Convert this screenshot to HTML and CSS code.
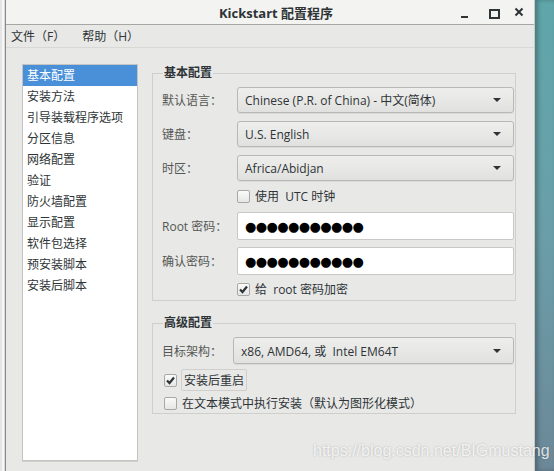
FILE: index.html
```html
<!DOCTYPE html>
<html lang="zh-CN">
<head>
<meta charset="utf-8">
<title>Kickstart 配置程序</title>
<link rel="stylesheet" href="styles.css">
</head>
<body>
<div class="desk">
  <div class="behind"></div>
  <div class="window">
    <div class="titlebar">
      <div class="title">Kickstart 配置程序</div>
      <div class="controls">
        <span class="ctl min"></span>
        <span class="ctl max"></span>
        <span class="ctl close">
          <svg width="10" height="10" viewBox="0 0 10 10"><path d="M1.5 1.5 L8.5 8.5 M8.5 1.5 L1.5 8.5" stroke="#2e3436" stroke-width="2"/></svg>
        </span>
      </div>
    </div>
    <div class="menubar">
      <span class="menu">文件（F）</span>
      <span class="menu">帮助（H）</span>
    </div>
    <div class="main">
      <ul class="navlist">
        <li class="sel">基本配置</li>
        <li>安装方法</li>
        <li>引导装载程序选项</li>
        <li>分区信息</li>
        <li>网络配置</li>
        <li>验证</li>
        <li>防火墙配置</li>
        <li>显示配置</li>
        <li>软件包选择</li>
        <li>预安装脚本</li>
        <li>安装后脚本</li>
      </ul>
      <div class="panel">
        <fieldset class="group basic">
          <legend>基本配置</legend>
          <div class="row">
            <label class="lbl">默认语言：</label>
            <div class="combo"><span>Chinese (P.R. of China) - 中文(简体)</span><i class="arrow"></i></div>
          </div>
          <div class="row">
            <label class="lbl">键盘：</label>
            <div class="combo"><span>U.S. English</span><i class="arrow"></i></div>
          </div>
          <div class="row">
            <label class="lbl">时区：</label>
            <div class="combo"><span>Africa/Abidjan</span><i class="arrow"></i></div>
          </div>
          <div class="checkrow utc">
            <span class="cb"></span><span class="cbtext">使用 &nbsp;UTC 时钟</span>
          </div>
          <div class="row pw">
            <label class="lbl">Root 密码：</label>
            <div class="entry"><span class="dots">●●●●●●●●●●●</span></div>
          </div>
          <div class="row pw">
            <label class="lbl">确认密码：</label>
            <div class="entry"><span class="dots">●●●●●●●●●●●</span></div>
          </div>
          <div class="checkrow enc">
            <span class="cb on"><svg width="11" height="11" viewBox="0 0 11 11"><path d="M2 5.5 L4.5 8 L9 2.5" fill="none" stroke="#2e3436" stroke-width="2.2"/></svg></span><span class="cbtext">给 &nbsp;root 密码加密</span>
          </div>
        </fieldset>
        <fieldset class="group adv">
          <legend>高级配置</legend>
          <div class="row arch">
            <label class="lbl">目标架构：</label>
            <div class="combo"><span>x86, AMD64, 或 &nbsp;Intel EM64T</span><i class="arrow"></i></div>
          </div>
          <div class="checkrow reboot">
            <span class="cb on"><svg width="11" height="11" viewBox="0 0 11 11"><path d="M2 5.5 L4.5 8 L9 2.5" fill="none" stroke="#2e3436" stroke-width="2.2"/></svg></span><span class="cbtext focus">安装后重启</span>
          </div>
          <div class="checkrow textmode">
            <span class="cb"></span><span class="cbtext">在文本模式中执行安装（默认为图形化模式）</span>
          </div>
        </fieldset>
      </div>
    </div>
  </div>
  <div class="bg"></div>
</div>
<div class="watermark">https://blog.csdn.net/BIGmustang</div>
</body>
</html>
```
FILE: styles.css
```css
* { box-sizing: border-box; }
html, body { margin: 0; padding: 0; }
body {
  width: 554px;
  height: 471px;
  overflow: hidden;
  position: relative;
  font-family: "Open Sans", "Noto Sans CJK SC", sans-serif;
  font-size: 12px;
  color: #2e3436;
}
.desk { display: flex; height: 471px; }
.behind {
  width: 5px;
  flex: none;
  background: linear-gradient(to right, #e4e4e4 0, #e4e4e4 2px, #f6f6f6 2px, #f6f6f6 4px, #d9d9d9 4px);
}
.window {
  width: 530px;
  flex: none;
  display: flex;
  flex-direction: column;
  border-left: 1px solid #8a8a8a;
  border-right: 1px solid #c9c9c7;
  background: #e8e8e7;
}
.bg {
  flex: 1;
  background: linear-gradient(to bottom, #5fa6aa 0%, #6a9ea8 50%, #6c8898 100%);
  box-shadow: inset 3px 0 4px rgba(0,0,0,0.25);
}
.titlebar {
  height: 25px;
  background: #f3f3f2;
  border-bottom: 1px solid #a6a6a4;
  display: flex;
  align-items: center;
  position: relative;
}
.title {
  flex: 1;
  text-align: center;
  font-weight: bold;
  font-size: 13px;
  padding-left: 12px;
  color: #2e3436;
}
.controls {
  position: absolute;
  right: 10px;
  top: 0;
  height: 24px;
  display: flex;
  align-items: center;
  gap: 17px;
}
.ctl { width: 10px; height: 10px; display: block; position: relative; }
.min::after {
  content: ""; position: absolute; left: 1px; bottom: -1px; width: 7px; height: 2px; background: #2e3436;
}
.max::after {
  content: ""; position: absolute; left: 2px; top: 2px; width: 7px; height: 6px; border: 2px solid #2e3436;
}
.close svg { display: block; }
.menubar {
  height: 23px;
  border-bottom: 1px solid #d8d8d6;
  display: flex;
  align-items: center;
  padding-left: 5px;
  gap: 17px;
}
.menu { color: #2e3436; }
.main {
  flex: 1;
  display: flex;
  padding: 16px 18px 0 16px;
  gap: 14px;
}
.navlist {
  list-style: none;
  margin: 0;
  padding: 0;
  width: 116px;
  flex: none;
  height: 397px;
  background: #fff;
  border: 1px solid #c4c4c2;
  box-shadow: 0 1px 0 #d0d0ce;
}
.navlist li {
  height: 21px;
  line-height: 21px;
  padding-left: 4px;
  white-space: nowrap;
}
.navlist li.sel { background: #4a90d9; color: #fff; }
.panel { flex: 1; display: flex; flex-direction: column; gap: 14px; padding-top: 1px; }
.group {
  margin: 0;
  border: 1px solid #cfcfcd;
  padding: 6px 1px 0 9px;
  min-width: 0;
}
.group legend {
  padding: 0 1px;
  margin-left: 1px;
  font-weight: bold;
  line-height: 16px;
  color: #2e3436;
}
.row { display: flex; align-items: center; height: 26px; margin-bottom: 8px; }
.lbl { width: 75px; color: #555753; flex: none; white-space: nowrap; }
.combo {
  flex: 1;
  height: 26px;
  border: 1px solid #b8b8b5;
  border-radius: 3px;
  background: linear-gradient(#eeeeed, #e1e1df);
  box-shadow: 0 1px 0 rgba(0,0,0,0.06);
  display: flex;
  align-items: center;
  padding: 0 12px 0 7px;
  color: #2e3436;
}
.combo span { flex: 1; white-space: nowrap; }
.arrow {
  width: 0; height: 0;
  border-left: 4px solid transparent;
  border-right: 4px solid transparent;
  border-top: 4px solid #2e3436;
}
.checkrow { display: flex; align-items: center; }
.cb {
  width: 13px; height: 13px;
  border: 1px solid #a8a8a6;
  border-radius: 2px;
  background: linear-gradient(#fafafa, #e6e6e4);
  display: flex; align-items: center; justify-content: center;
  flex: none;
}
.cb svg { display: block; }
.cbtext { margin-left: 5px; color: #2e3436; white-space: nowrap; }
.utc { height: 22px; margin: -4px 0 5px 75px; }
.row.pw { height: 28px; margin-bottom: 7px; }
.entry {
  flex: 1;
  height: 28px;
  background: #fff;
  border: 1px solid #c8c8c6;
  border-radius: 2px;
  display: flex;
  align-items: center;
  padding-left: 7px;
}
.dots {
  font-family: "DejaVu Sans", sans-serif;
  font-size: 13px;
  letter-spacing: -0.6px;
  color: #000;
}
.enc { height: 20px; margin: -3px 0 1px 75px; }
.adv { padding-left: 9px; padding-bottom: 0; }
.row.arch { height: 27px; margin-bottom: 5px; }
.arch .lbl { width: 71px; }
.arch .combo { height: 27px; }
.reboot { height: 22px; margin-left: 2px; }
.reboot .cbtext.focus {
  border: 1px solid #cfcfcd;
  border-radius: 2px;
  padding: 1px 2px;
  margin-left: 4px;
}
.textmode { height: 20px; margin: 2px 0 0 2px; }
.watermark {
  position: absolute;
  left: 313px;
  top: 442px;
  font-family: "Liberation Sans", Arial, sans-serif;
  font-size: 16px;
  color: rgba(255,255,255,0.8);
  text-shadow: 0 0 2px rgba(0,0,0,0.25);
  white-space: nowrap;
}
```
